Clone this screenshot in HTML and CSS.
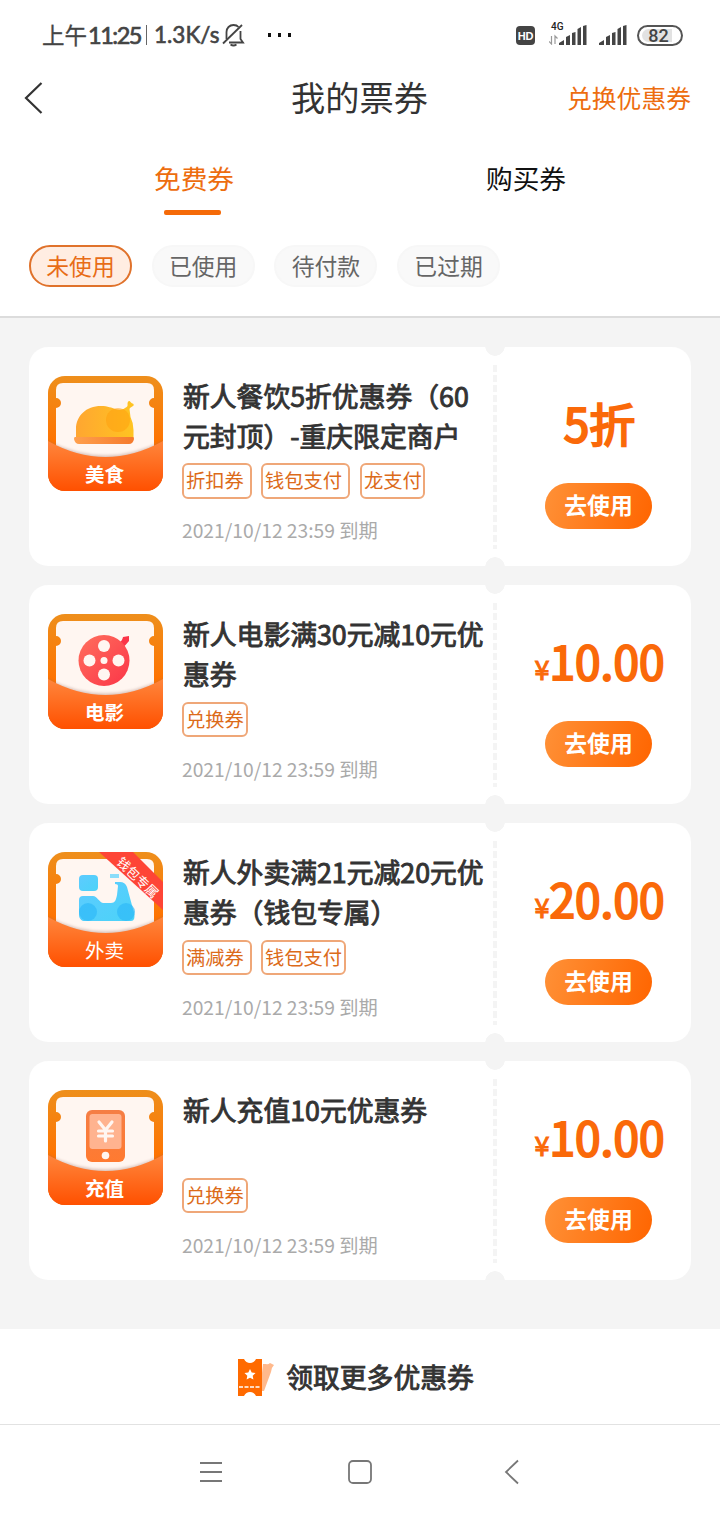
FILE: index.html
```html
<!DOCTYPE html>
<html lang="zh-CN">
<head>
<meta charset="utf-8">
<title>我的票券</title>
<link rel="stylesheet" href="styles.css">
</head>
<body>
<svg class="defs" width="0" height="0" aria-hidden="true">
  <defs>
    <linearGradient id="edge" x1="0" y1="0" x2="0" y2="1"><stop offset="0" stop-color="#ee8f1c"/><stop offset=".6" stop-color="#ff7200"/></linearGradient>
    <linearGradient id="pocket" x1="0" y1="0" x2="0" y2="1"><stop offset="0" stop-color="#ff863c"/><stop offset="1" stop-color="#ff5000"/></linearGradient>
    <linearGradient id="gold" x1="0" y1="0" x2="1" y2="0"><stop offset="0" stop-color="#ffa631"/><stop offset="1" stop-color="#ffc421"/></linearGradient>
    <linearGradient id="plate" x1="0" y1="0" x2="1" y2="0"><stop offset="0" stop-color="#ffa04e"/><stop offset="1" stop-color="#f57a2c"/></linearGradient>
    <linearGradient id="red" x1="0" y1="0" x2="1" y2="1"><stop offset="0" stop-color="#ff6f5d"/><stop offset="1" stop-color="#fb3548"/></linearGradient>
    <linearGradient id="blue" x1="0" y1="0" x2="1" y2="1"><stop offset="0" stop-color="#5ecbff"/><stop offset="1" stop-color="#4bd3f8"/></linearGradient>
    <linearGradient id="phone" x1="0" y1="0" x2="0" y2="1"><stop offset="0" stop-color="#f57e45"/><stop offset="1" stop-color="#ff7a30"/></linearGradient>
    <filter id="soft" x="-20%" y="-20%" width="140%" height="140%"><feGaussianBlur stdDeviation="1.8"/></filter>
    <clipPath id="tile"><rect width="115" height="115" rx="17"/></clipPath>
    <g id="ticket-back">
      <rect width="115" height="115" fill="url(#edge)"/>
      <path d="M15 7h84q7 0 7 7v8a5 5 0 0 0 0 10v60H8V32a5 5 0 0 0 0-10v-8q0-7 7-7z" fill="#fff6f1"/>
    </g>
    <g id="ticket-front">
      <path d="M-2 64Q57.500 95 117 64v55H-2z" fill="#9b6d60" opacity=".4" filter="url(#soft)"/>
      <path d="M0 65Q57.500 97 115 65v50H0z" fill="url(#pocket)"/>
    </g>
    <g id="signal" fill="#444"><path d="M0 20v-2l5-3v5zM7 20v-8l4-2v10zM13 20V8l3.500-1v13zM18.500 20V4l3.500-2v18zM24 20V1l3.500-1v20z"/></g>
  </defs>
</svg>

<div class="screen">
  <header class="status">
    <span class="status-time">上午<b>11:25</b></span>
    <i class="status-sep"></i>
    <span class="status-speed">1.3K/s</span>
    <svg class="bell" width="23" height="24" viewBox="0 0 23 24" fill="none" stroke="#444" stroke-width="1.800"><path d="M4.500 16V9c0-4 3-7 7-7 2 0 4 .8 5 2M18.500 8v8l2.500 3.500H7"/><path d="M1 20.500 20 2"/><path d="M8.500 21.500q3 2 6 0"/></svg>
    <span class="status-more"><i></i><i></i><i></i></span>
    <span class="hd">HD</span>
    <span class="mobile"><small>4G</small><svg width="38" height="20" viewBox="0 0 38 20"><path d="M2.500 11v8L0 16.500M6 19v-8l2.500 2.500" fill="none" stroke="#999" stroke-width="1.200"/><use href="#signal" x="10"/></svg></span>
    <svg class="signal" width="28" height="20"><use href="#signal"/></svg>
    <span class="battery"><b>82</b></span>
  </header>

  <nav class="titlebar">
    <svg class="back" width="20" height="32" viewBox="0 0 20 32" fill="none" stroke="#333" stroke-width="2.200"><path d="M17.500 1 2 16l15.500 15"/></svg>
    <h1>我的票券</h1>
    <a class="redeem">兑换优惠券</a>
  </nav>

  <div class="tabs">
    <div class="tab tab-active">免费券</div>
    <div class="tab">购买券</div>
  </div>

  <div class="chips">
    <span class="chip chip-active">未使用</span>
    <span class="chip">已使用</span>
    <span class="chip">待付款</span>
    <span class="chip">已过期</span>
  </div>

  <main class="list">
    <article class="card">
      <div class="thumb">
        <svg width="115" height="115" viewBox="0 0 115 115"><g clip-path="url(#tile)"><use href="#ticket-back"/>
          <path d="M28 62V53c0-13 10-23 25-23 7 0 11 2 14 3 4 1 8 1 10-1 2-1 3-2 2.500-4 0-3 2-4 3-2l1 1 2 1c1 3-3 2-4 5l1 8q3 6 3 13v8z" fill="url(#gold)"/>
          <circle cx="70" cy="44" r="12" fill="#ff9d0c" opacity=".5"/>
          <path d="M27 61h58q1 0 1 2-1 5-5 5H31q-4 0-5-5 0-2 1-2z" fill="url(#plate)"/>
          <use href="#ticket-front"/></g></svg>
        <span class="thumb-label">美食</span>
      </div>
      <div class="info">
        <h2>新人餐饮5折优惠券（60<br>元封顶）-重庆限定商户</h2>
        <div class="tags"><span class="tag-wide">折扣券</span><span class="tag-wider">钱包支付</span><span>龙支付</span></div>
        <time>2021/10/12 23:59 到期</time>
      </div>
      <div class="action"><div class="price">5折</div><button>去使用</button></div>
    </article>

    <article class="card card-short-tags">
      <div class="thumb">
        <svg width="115" height="115" viewBox="0 0 115 115"><g clip-path="url(#tile)"><use href="#ticket-back"/>
          <path d="M70 29q4-1 5-6l6-1v5q-3 4-7 7z" fill="#fb3548"/>
          <circle cx="56" cy="46.500" r="25.500" fill="url(#red)"/>
          <g fill="#fff6f1"><circle cx="56" cy="32" r="6"/><circle cx="41.500" cy="46.500" r="6"/><circle cx="70.500" cy="46.500" r="6"/><circle cx="56" cy="60.500" r="6"/><circle cx="56" cy="46.500" r="3.500"/></g>
          <use href="#ticket-front"/></g></svg>
        <span class="thumb-label">电影</span>
      </div>
      <div class="info">
        <h2>新人电影满30元减10元优<br>惠券</h2>
        <div class="tags"><span>兑换券</span></div>
        <time>2021/10/12 23:59 到期</time>
      </div>
      <div class="action"><div class="price"><small>¥</small>10.00</div><button>去使用</button></div>
    </article>

    <article class="card card-short-tags">
      <div class="thumb">
        <svg width="115" height="115" viewBox="0 0 115 115"><g clip-path="url(#tile)"><use href="#ticket-back"/>
          <rect x="31" y="23" width="19" height="16" rx="4" fill="url(#blue)"/>
          <path d="M62 22h9v4h-9z" fill="#8addfa"/>
          <path d="M31 48q0-4 4-4h10c4 0 6 6 10 7h8c4 0 5-3 6-8l1-9q0-2-3-2v-2h5q5 0 7 5l6 22c3 9 1 12-2 12H35q-4-2-4-6z" fill="url(#blue)"/>
          <circle cx="40" cy="60" r="9" fill="#2fb9f8" opacity=".7"/><circle cx="78" cy="60" r="9" fill="#2fb9f8" opacity=".7"/>
          <use href="#ticket-front"/>
          <path d="M51 0h34l30 30v28z" fill="#fe4536"/></g>
          <text class="ribbon" transform="translate(86.500 29) rotate(44)" text-anchor="middle">钱包专属</text></svg>
        <span class="thumb-label thumb-label-thin">外卖</span>
      </div>
      <div class="info">
        <h2>新人外卖满21元减20元优<br>惠券（钱包专属）</h2>
        <div class="tags"><span class="tag-wide">满减券</span><span class="tag-medium">钱包支付</span></div>
        <time>2021/10/12 23:59 到期</time>
      </div>
      <div class="action"><div class="price"><small>¥</small>20.00</div><button>去使用</button></div>
    </article>

    <article class="card card-short-tags">
      <div class="thumb">
        <svg width="115" height="115" viewBox="0 0 115 115"><g clip-path="url(#tile)"><use href="#ticket-back"/>
          <rect x="38" y="20" width="39" height="52" rx="6" fill="url(#phone)"/>
          <rect x="41.500" y="24" width="32" height="35" rx="3" fill="#ffb38f"/>
          <circle cx="57.500" cy="65.500" r="3.800" fill="#fff6f1"/>
          <path d="m51 32 6.500 8 6.500-8M57.500 40v11M50.500 41h14M50.500 46h14" fill="none" stroke="#fff6f1" stroke-width="3.200" stroke-linecap="round"/>
          <use href="#ticket-front"/></g></svg>
        <span class="thumb-label">充值</span>
      </div>
      <div class="info">
        <h2>新人充值10元优惠券</h2>
        <div class="tags"><span>兑换券</span></div>
        <time>2021/10/12 23:59 到期</time>
      </div>
      <div class="action"><div class="price"><small>¥</small>10.00</div><button>去使用</button></div>
    </article>
  </main>

  <div class="more">
    <svg width="36" height="38" viewBox="0 0 36 38"><path d="M25 6h3q2 1 4-1l4 2q-3 3-3 7L26 33h-4z" fill="#ffb98c"/><path d="M0 1h6q2 4 6 4t6-4h6v37h-6q-2-4-6-4t-6 4H0z" fill="#ff6a00"/><path d="m12 11 1.700 3.500 3.800.5-2.800 2.700.7 3.800-3.400-1.800-3.400 1.800.7-3.800L6.500 15l3.800-.5z" fill="#fff"/><path d="M1 29h21" stroke="#fff" stroke-width="1.600" stroke-dasharray="4 1.500"/></svg>
    <span>领取更多优惠券</span>
  </div>

  <footer class="sysnav">
    <svg width="24" height="24" viewBox="0 0 24 24"><path d="M1 3h22M1 12h22M1 21h22"/></svg>
    <svg width="26" height="26" viewBox="0 0 26 26"><rect x="2" y="2" width="22" height="22" rx="4"/></svg>
    <svg width="16" height="26" viewBox="0 0 16 26"><path d="M14 1.500 2 13l12 11.500"/></svg>
  </footer>
</div>
</body>
</html>
```
FILE: styles.css
```css
* { box-sizing: border-box; }
body { margin: 0; background: #fff; font-family: "Noto Sans CJK SC", sans-serif; color: #333; }
h1, h2 { margin: 0; font-weight: 400; }
svg { display: block; flex: none; }
.defs { position: absolute; }
.screen { width: 720px; height: 1520px; display: flex; flex-direction: column; background: #fff; overflow: hidden; }

.status { height: 68px; padding: 2px 37px 0 42px; display: flex; align-items: center; color: #444; font-size: 22.500px; line-height: 34px; white-space: nowrap; }
.status-time { width: 98px; font-weight: 400; display: flex; align-items: center; margin-top: -2px; -webkit-text-stroke: .3px #444; }
.status-time b { font: 400 23.500px/34px Lato, sans-serif; -webkit-text-stroke: .7px #444; letter-spacing: -1.500px; margin: 1px 0 0 1px; }
.status-sep { width: 1px; height: 20px; margin: 0 7px 0 6px; background: #666; }
.status-speed { width: 63px; font: 400 22.500px/34px Lato, sans-serif; -webkit-text-stroke: .6px #444; letter-spacing: 0; margin-top: -1px; }
.bell { margin-left: 5px; }
.status-more { display: flex; gap: 7px; margin-left: 23px; }
.status-more i { width: 3px; height: 4px; background: #111; }
.hd { width: 19px; height: 19px; margin-left: auto; border-radius: 4px; background: #444; color: #fff; font: 700 11px/20px "Liberation Sans", sans-serif; text-align: center; letter-spacing: -.3px; }
.mobile { position: relative; margin-left: 14px; }
.mobile small { position: absolute; left: 2px; top: -4px; font: 500 10px/12px Roboto, sans-serif; color: #222; }
.signal { margin-left: 12px; }
.battery { width: 46px; height: 21px; margin-left: 10px; padding: 2px 3px; border: 2px solid #555; border-radius: 11px; display: flex; }
.battery b { width: 100%; padding-right: 3px; border-radius: 8px; background: linear-gradient(90deg, #e2e2e2 82%, #fff 82%); font: 500 18px/14px Roboto, sans-serif; text-align: center; letter-spacing: 0; }

.titlebar { height: 60px; padding: 0 28px 0 24px; display: grid; grid-template-columns: 1fr auto 1fr; align-items: center; }
.titlebar h1 { font-size: 34.200px; line-height: 50px; padding-left: 3px; margin-top: -4px; }
.redeem { justify-self: end; font-size: 24.800px; line-height: 36px; color: #ed6d0f; margin: -3px 1px 0 0; }

.tabs { height: 88px; display: flex; padding: 0 28px; justify-content: space-between; }
.tab { width: 332px; padding-top: 30px; display: flex; flex-direction: column; align-items: center; font-size: 26.700px; line-height: 40px; color: #111; }
.tab-active { color: #ed6d0f; }
.tab-active::after { content: ""; width: 57px; height: 5px; margin: 12px 3px 0 0; border-radius: 2px; background: #f56a08; }

.chips { height: 102px; padding: 29px 29px 0; display: flex; gap: 19.700px; border-bottom: 2px solid #dcdcdc; }
.chip { width: 103px; height: 42px; border: 2px solid #f7f7f7; border-radius: 21px; background: #f9f9f9; font-size: 22.800px; line-height: 37px; text-align: center; color: #666; }
.chip-active { border-color: #e0722b; background: #ffede2; color: #e86c16; }

.list { height: 1011px; padding: 29px; display: flex; flex-direction: column; gap: 19px; background: #f4f4f4; }
.card { height: 219px; padding: 29px 0 0 19px; display: flex; border-radius: 19px; background: radial-gradient(circle at 466px -1px, #f4f4f4 9.500px, transparent 10px), radial-gradient(circle at 466px 220px, #f4f4f4 9.500px, transparent 10px), #fff; }
.thumb { position: relative; width: 115px; height: 115px; flex: none; }
.thumb-label { position: absolute; left: 0; right: 0; top: 84px; text-align: center; font-size: 19.500px; line-height: 28px; font-weight: 700; color: #fff; padding-right: 2px; }
.thumb-label-thin { font-weight: 400; }
.ribbon { font-size: 13px; fill: #fff; }
.info { width: 330px; flex: none; padding-left: 19px; display: flex; flex-direction: column; align-items: flex-start; }
.info h2 { height: 80px; padding-left: 1px; font-size: 26.800px; line-height: 40px; -webkit-text-stroke: .9px #333; white-space: nowrap; }
.tags { display: flex; gap: 9px; margin-top: 7px; }
.tags span { width: 66px; height: 36px; padding-left: 2px; border: 2px solid #efa778; border-radius: 6px; font-size: 19.300px; line-height: 31px; color: #dc6b1a; white-space: nowrap; }
.card-short-tags .tags { margin-top: 8px; }
.card-short-tags .tags span { height: 35px; }
.tags .tag-wide { width: 70px; }
.tags .tag-medium { width: 85px; }
.tags .tag-wider { width: 89px; }
.tags .tag-wider + span { margin-left: 1px; width: 65px; }
time { margin-top: 18px; font-size: 19.250px; line-height: 28px; color: #aaa; white-space: nowrap; }
.card:first-child time { margin-top: 17px; }
.action { width: 198px; flex: none; height: 184px; margin-top: -11px; padding: 31px 0 0 13px; display: flex; flex-direction: column; align-items: center; background: linear-gradient(#f4f4f4 70%, transparent 70%) 0 0 / 4px 10px repeat-y; }
.price { height: 54px; margin-top: -1px; padding-left: 2px; font-size: 46px; line-height: 54px; color: #fa6909; -webkit-text-stroke: 2.100px #fa6909; white-space: nowrap; }
.price small { font-size: 27px; -webkit-text-stroke-width: 1px; }
button { width: 107px; height: 46px; margin-top: 34px; padding: 0 0 2px; border: 0; border-radius: 23px; background: linear-gradient(105deg, #ff9137, #ff6500); font: 700 22.800px/42px "Noto Sans CJK SC", sans-serif; color: #fff; }

.more { height: 96px; padding: 0 8px 0 0; display: flex; align-items: center; justify-content: center; gap: 12px; border-bottom: 1px solid #e2e2e2; font-size: 26.800px; -webkit-text-stroke: .9px #333; }
.more svg { -webkit-text-stroke: 0; }
.sysnav { height: 95px; padding: 0 200px 2px 199px; display: grid; grid-template-columns: 24px 1fr 16px; justify-items: center; align-items: center; }
.sysnav svg { fill: none; stroke: #777; stroke-width: 1.800; }
.sysnav svg:nth-child(2) { margin-right: 7px; }
```
